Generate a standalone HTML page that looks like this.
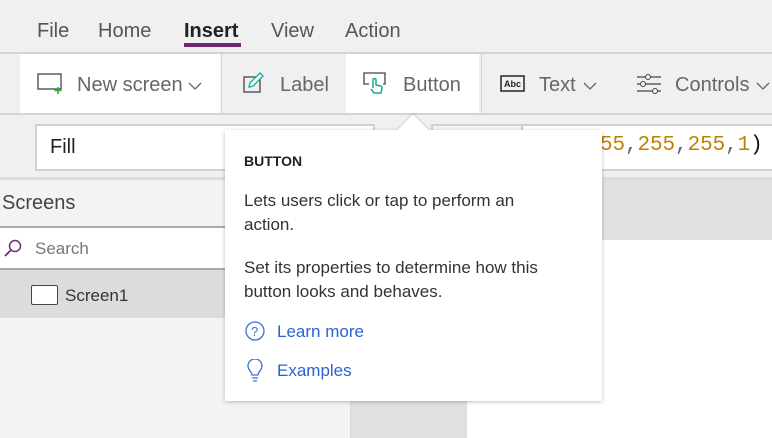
<!DOCTYPE html>
<html><head><style>
*{margin:0;padding:0;box-sizing:border-box}
body{width:772px;height:438px;overflow:hidden;position:relative;background:#f3f3f3;font-family:"Segoe UI","Liberation Sans",sans-serif;color:#333}
.a{position:absolute}
.menu span{position:absolute;top:20px;font-size:20px;color:#555}
.rib{font-size:20px;color:#666}
</style></head><body>
<div class="a" style="left:0;top:0;width:772px;height:52px;background:#f0f0f0"></div>
<div class="menu">
<span style="left:37px">File</span>
<span style="left:98px">Home</span>
<span style="left:184px;color:#222;font-weight:bold">Insert</span>
<span style="left:271px">View</span>
<span style="left:345px">Action</span>
</div>
<div class="a" style="left:184px;top:43px;width:57px;height:4px;background:#742774"></div>
<div class="a" style="left:0;top:52px;width:772px;height:2px;background:#d4d4d4"></div>
<div class="a" style="left:0;top:54px;width:772px;height:59px;background:#f0f0f0"></div>
<div class="a" style="left:20px;top:54px;width:200px;height:59px;background:#fff"></div>
<div class="a" style="left:221px;top:54px;width:1px;height:59px;background:#d4d4d4"></div>
<div class="a" style="left:346px;top:54px;width:133px;height:59px;background:#fff"></div>
<div class="a" style="left:481px;top:54px;width:1px;height:59px;background:#d4d4d4"></div>
<div class="a" style="left:0;top:113px;width:772px;height:2px;background:#d4d4d4"></div>
<svg class="a" style="left:37px;top:73px" width="26" height="22"><rect x="1" y="1" width="23" height="15" fill="none" stroke="#444" stroke-width="1.3"/><path d="M21 14v7M17.5 17.5h7" stroke="#3a3" stroke-width="1.6"/></svg>
<span class="a rib" style="left:77px;top:74px">New screen</span>
<svg class="a" style="left:188px;top:82px" width="14" height="9"><path d="M1 1l6 6 6-6" fill="none" stroke="#666" stroke-width="1.3"/></svg>
<svg class="a" style="left:243px;top:72px" width="22" height="22"><rect x="1" y="5" width="16" height="15" fill="none" stroke="#444" stroke-width="1.3"/><path d="M6 15l1-4 10-10 3 3-10 10z" fill="#fff" stroke="#1a9" stroke-width="1.3"/></svg>
<span class="a rib" style="left:280px;top:74px">Label</span>
<svg class="a" style="left:363px;top:72px" width="26" height="24"><path d="M6 12H1V1h21v11h-2" fill="none" stroke="#444" stroke-width="1.3"/><path d="M10 16V8a1.5 1.5 0 013 0v5l5 1a2 2 0 011 2l-1 5h-7l-3-4" fill="#fff" stroke="#1a9" stroke-width="1.5"/></svg>
<span class="a rib" style="left:403px;top:74px">Button</span>
<svg class="a" style="left:500px;top:75px" width="25" height="17"><rect x="1" y="1" width="23" height="15" fill="none" stroke="#222" stroke-width="1.5"/><text x="4" y="12" font-size="9" font-family="Liberation Sans" font-weight="bold" fill="#222">Abc</text></svg>
<span class="a rib" style="left:539px;top:74px">Text</span>
<svg class="a" style="left:583px;top:82px" width="14" height="9"><path d="M1 1l6 6 6-6" fill="none" stroke="#666" stroke-width="1.3"/></svg>
<svg class="a" style="left:636px;top:73px" width="25" height="22"><path d="M1 4h24M1 11h24M1 18h24" stroke="#444" stroke-width="1.3"/><circle cx="12" cy="4" r="2.5" fill="#f0f0f0" stroke="#444"/><circle cx="7" cy="11" r="2.5" fill="#f0f0f0" stroke="#444"/><circle cx="19" cy="18" r="2.5" fill="#f0f0f0" stroke="#444"/></svg>
<span class="a rib" style="left:675px;top:74px">Controls</span>
<svg class="a" style="left:756px;top:82px" width="14" height="9"><path d="M1 1l6 6 6-6" fill="none" stroke="#666" stroke-width="1.3"/></svg>
<div class="a" style="left:0;top:115px;width:772px;height:65px;background:#f0f0f0"></div>
<div class="a" style="left:35px;top:124px;width:340px;height:47px;background:#fff;border:2px solid #d0d0d0"></div>
<span class="a" style="left:50px;top:136px;font-size:20px;color:#222">Fill</span>
<div class="a" style="left:431px;top:124px;width:92px;height:47px;background:#f4f4f4;border:2px solid #d0d0d0"></div>
<div class="a" style="left:521px;top:124px;width:260px;height:47px;background:#fff;border:2px solid #d0d0d0"></div>
<span class="a" style="left:600px;top:134px;font-size:21px;font-family:'Liberation Mono',monospace;color:#c08000;letter-spacing:-0.1px">55<span style="color:#666">,</span>255<span style="color:#666">,</span>255<span style="color:#666">,</span>1<span style="color:#111">)</span></span>
<div class="a" style="left:0;top:177px;width:772px;height:3px;background:#ddd"></div>
<div class="a" style="left:466px;top:180px;width:306px;height:60px;background:#e0e0e0"></div>
<div class="a" style="left:466px;top:240px;width:306px;height:198px;background:#fff"></div>
<div class="a" style="left:350px;top:180px;width:1px;height:258px;background:#d8d8d8"></div>
<div class="a" style="left:351px;top:180px;width:116px;height:258px;background:#e0e0e0"></div>
<span class="a" style="left:2px;top:192px;font-size:20px;color:#444">Screens</span>
<div class="a" style="left:0;top:226px;width:230px;height:2px;background:#aaa"></div>
<div class="a" style="left:0;top:228px;width:230px;height:41px;background:#fff"></div>
<svg class="a" style="left:3px;top:239px" width="20" height="20"><circle cx="12" cy="7" r="5.5" fill="none" stroke="#742774" stroke-width="1.5"/><path d="M8 11l-6 6" stroke="#742774" stroke-width="1.8"/></svg>
<span class="a" style="left:35px;top:239px;font-size:17px;color:#777">Search</span>
<div class="a" style="left:0;top:268px;width:230px;height:2px;background:#aaa"></div>
<div class="a" style="left:0;top:270px;width:230px;height:48px;background:#dcdcdc"></div>
<div class="a" style="left:31px;top:285px;width:27px;height:20px;border:1.5px solid #444;background:#fff;border-radius:2px"></div>
<span class="a" style="left:65px;top:286px;font-size:17px;color:#333">Screen1</span>
<div class="a" style="left:225px;top:130px;width:377px;height:271px;background:#fff;box-shadow:0 1px 4px rgba(0,0,0,.25)"></div>
<div class="a" style="left:402px;top:119px;width:22px;height:22px;background:#fff;transform:rotate(45deg);box-shadow:-1px -1px 2px rgba(0,0,0,.12)"></div>
<div class="a" style="left:396px;top:131px;width:34px;height:14px;background:#fff"></div>
<span class="a" style="left:244px;top:153px;font-size:14px;font-weight:bold;color:#222">BUTTON</span>
<div class="a" style="left:244px;top:189px;font-size:17px;line-height:24px;color:#333;width:305px">Lets users click or tap to perform an action.</div>
<div class="a" style="left:244px;top:256px;font-size:17px;line-height:24px;color:#333;width:312px">Set its properties to determine how this button looks and behaves.</div>
<svg class="a" style="left:245px;top:321px" width="20" height="20"><circle cx="10" cy="10" r="9" fill="none" stroke="#3a6fd8" stroke-width="1.3"/><text x="6" y="15" font-size="13" font-family="Liberation Sans" fill="#3a6fd8">?</text></svg>
<span class="a" style="left:277px;top:322px;font-size:17px;color:#2a62d4">Learn more</span>
<svg class="a" style="left:247px;top:359px" width="16" height="23"><path d="M5 16c0-3-4-5-4-9a7 7 0 0114 0c0 4-4 6-4 9zM5 19h6M6 22h4" fill="none" stroke="#3a6fd8" stroke-width="1.3"/></svg>
<span class="a" style="left:277px;top:361px;font-size:17px;color:#2a62d4">Examples</span>
</body></html>
